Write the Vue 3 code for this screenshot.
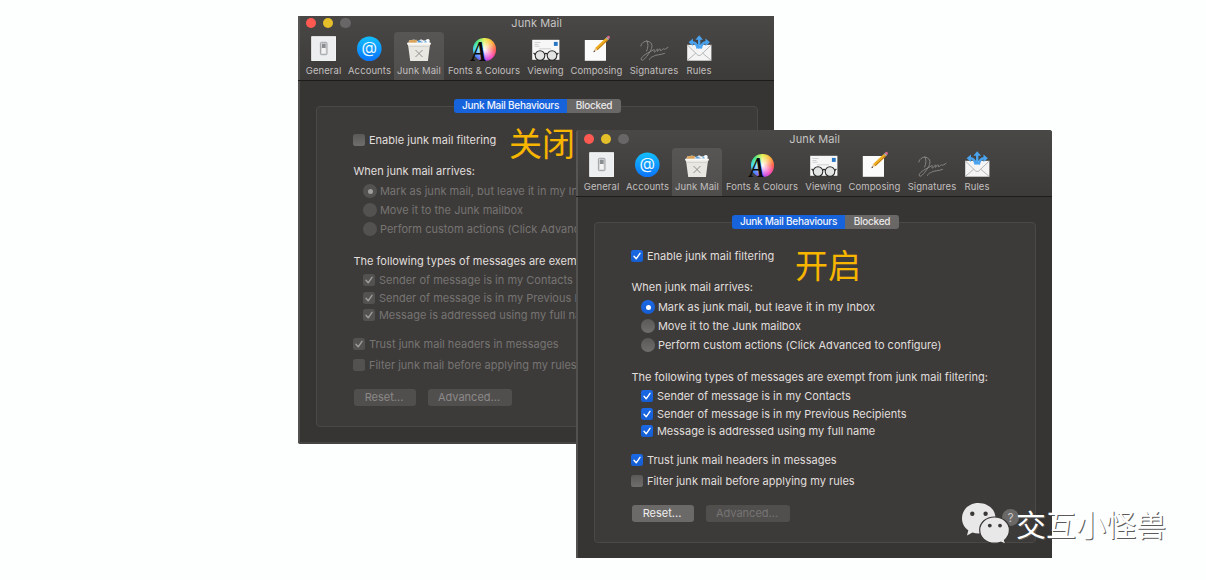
<script setup>
import { ref } from 'vue'

const tabs = [
  { id: 'general', label: 'General', width: 43 },
  { id: 'accounts', label: 'Accounts', width: 49 },
  { id: 'junk', label: 'Junk Mail', width: 50 },
  { id: 'fonts', label: 'Fonts & Colours', width: 80 },
  { id: 'viewing', label: 'Viewing', width: 43 },
  { id: 'composing', label: 'Composing', width: 59 },
  { id: 'signatures', label: 'Signatures', width: 56 },
  { id: 'rules', label: 'Rules', width: 34 }
]

const actions = [
  'Mark as junk mail, but leave it in my Inbox',
  'Move it to the Junk mailbox',
  'Perform custom actions (Click Advanced to configure)'
]

const exemptions = [
  'Sender of message is in my Contacts',
  'Sender of message is in my Previous Recipients',
  'Message is addressed using my full name'
]

const panels = ref([
  { id: 'off', enabled: false, note: '关闭' },
  { id: 'on', enabled: true, note: '开启' }
])
</script>

<template>
  <div class="canvas">
    <div v-for="panel in panels" :key="panel.id" class="window" :class="panel.id">
      <div class="header">
        <div class="titlebar">
          <div class="lights"><i class="red"></i><i class="yellow"></i><i class="grey"></i></div>
          <span class="title">Junk Mail</span>
        </div>
        <div class="toolbar">
          <div
            v-for="tab in tabs"
            :key="tab.id"
            class="tool"
            :class="{ active: tab.id === 'junk' }"
            :style="{ width: tab.width + 'px' }"
          >
            <div class="icon">
              <svg v-if="tab.id === 'general'" viewBox="0 0 28 28">
                <rect x="1.4" y="1.4" width="24.5" height="24.4" fill="#eceef0" />
                <rect x="1.8" y="1.8" width="23.7" height="23.6" fill="none" stroke="#fafafa" stroke-width=".8" />
                <rect x="10.4" y="7.3" width="6.6" height="12.4" rx="1" fill="#d5d6d7" stroke="#a0a2a4" />
                <rect x="11.9" y="8.8" width="3.7" height="4.5" fill="#8b8e91" />
                <rect x="11.9" y="13" width="3.7" height="5.2" fill="#f3f3f3" />
              </svg>
              <svg v-else-if="tab.id === 'accounts'" viewBox="0 0 28 28">
                <defs>
                  <linearGradient id="blue" x1="0" y1="0" x2="0" y2="1">
                    <stop offset="0" stop-color="#12c0fd" />
                    <stop offset="1" stop-color="#0b73fb" />
                  </linearGradient>
                </defs>
                <circle cx="13.3" cy="13.7" r="12.3" fill="url(#blue)" />
                <text x="13.3" y="18.2" text-anchor="middle" class="at">@</text>
              </svg>
              <svg v-else-if="tab.id === 'junk'" viewBox="0 0 28 28">
                <path d="M3 10 L4 5.5 9 4.5 13 6 16 4.2 20 6 24 4 25 10Z" fill="#dfe5ea" />
                <path d="M3.5 8 L4.5 5.3 12 4.8 11.5 8Z" fill="#d9a35c" />
                <path d="M12 7.5 L14 5 18 7.8Z" fill="#559ddb" />
                <path d="M17 7 L22.5 4 24.7 5 24 8Z" fill="#f8fbfd" />
                <path d="M19 7.5 L20.5 5 22 7.5Z" fill="#6baada" />
                <path d="M2.3 8 H25.7 L24.8 11 L22.9 26 H5.2 L3.2 11Z" fill="#e9e7e1" />
                <path d="M2.2 7.7 H25.8 V9.5 H2.2Z" fill="#fbfaf7" />
                <path d="M3.2 11.5 H24.7" stroke="#cfccc5" stroke-width=".7" />
                <path d="M10.5 15 L17.5 22 M17.5 15 L10.5 22" stroke="#93908b" stroke-width="1" />
              </svg>
              <template v-else-if="tab.id === 'fonts'">
                <span class="wheel"></span>
                <svg viewBox="0 0 28 28">
                  <g transform="translate(1.6 25.6) scale(.78 1)">
                    <text x="0" y="0" class="letter">A</text>
                  </g>
                </svg>
              </template>
              <svg v-else-if="tab.id === 'viewing'" viewBox="0 0 28 28">
                <rect x=".2" y="4.8" width="27.2" height="20" fill="#f7f7f7" />
                <path d="M2.5 7.5 h6 M2.5 9.5 h4 M2.5 11.3 h5" stroke="#c4c6c8" stroke-width=".8" />
                <path d="M7 13.8 h12" stroke="#bdbfc0" stroke-width=".7" />
                <rect x="21.9" y="6.9" width="3.8" height="4" fill="#2675c5" />
                <g fill="#e2e3e3" stroke="#2c2c2c" stroke-width="1.1">
                  <circle cx="8" cy="20.6" r="4.8" />
                  <circle cx="20" cy="20.6" r="4.8" />
                  <path d="M12.5 19.5 Q14 17.3 15.5 19.5 M3.2 19.5 L1.6 18 M24.8 19.5 L26.4 18" fill="none" />
                </g>
              </svg>
              <svg v-else-if="tab.id === 'composing'" viewBox="0 0 28 28">
                <rect x="1.8" y="5" width="21.2" height="20.8" fill="#fbfbfb" />
                <g transform="translate(.6 0)">
                  <path d="M9.8 17.2 L11.5 12.7 L14 15Z" fill="#ebc898" />
                  <path d="M9.8 17.2 L10.5 15.3 L11.6 16.4Z" fill="#333" />
                  <path d="M11.5 12.9 L22.2 2.9 L24.5 5.1 L14 15.1Z" fill="#efae22" />
                  <path d="M13.2 14.4 L23.8 4.5 L24.5 5.1 L14 15.1Z" fill="#b97611" />
                  <path d="M22.2 2.9 L23.3 1.9 L25.6 4.1 L24.5 5.1Z" fill="#b6babc" />
                  <path d="M23.3 1.9 Q24.5 .2 25.9 1.3 Q27 2.6 25.6 4.1Z" fill="#e2688b" />
                </g>
              </svg>
              <svg v-else-if="tab.id === 'signatures'" viewBox="0 0 28 28">
                <path
                  d="M.8 11 C1.5 7 6 5.3 9.3 6.8 C13.8 9 11.8 14.5 8.8 18.5 C6 22.5 2.8 26.5 1.3 24.8 C0 22.5 6.5 18.3 10.8 16.4 C13.5 15.1 14.8 13.2 14.2 15.7 C13.7 18.1 15.2 17.2 16.6 14.8 C17.8 12.8 18.2 14.4 17.5 16.4 C18.5 15 20.2 12.7 20.4 14.4 C20.1 16.9 21.2 15.9 22.5 14.3 C23.7 13 23.8 15 25.3 14 L28 12.4 M6.8 5.6 C8.5 9 8.3 12 6.6 16 M9.5 24.4 C11.5 20.8 13.3 22 14 21 C16 19.6 20 20.2 24.5 18.4"
                  fill="none" stroke="#8d8b8a" stroke-width=".9" stroke-linecap="round"
                />
              </svg>
              <svg v-else viewBox="0 0 28 28">
                <rect x="2.2" y="9.8" width="24.2" height="15.9" fill="#f4f4f4" />
                <path d="M2.4 10 L12.6 20 Q14.2 21.3 15.8 20 L26.2 10 M2.4 25.4 L10.7 18.2 M26.2 25.4 L17.7 18.2" fill="none" stroke="#a5a6a7" stroke-width=".8" />
                <g fill="none" stroke="#4aa3ef" stroke-width="2.4">
                  <path d="M14.2 13.5 V4" />
                  <path d="M12.6 13.5 C12 9.5 10 7.3 7 7.3" />
                  <path d="M15.8 13.5 C16.4 9.5 18.4 7.3 21.4 7.3" />
                </g>
                <path d="M14.2 .3 L18 4.7 H10.4Z M3.6 7.3 L8 3.6 V11Z M24.9 7.3 L20.5 3.6 V11Z" fill="#4aa3ef" />
              </svg>
            </div>
            <span class="tool-label">{{ tab.label }}</span>
          </div>
        </div>
      </div>

      <div class="group">
        <div class="segments">
          <span class="segment selected">Junk Mail Behaviours</span>
          <span class="segment">Blocked</span>
        </div>
        <span class="note">{{ panel.note }}</span>

        <div class="row enable">
          <span class="check" :class="{ on: panel.enabled }">
            <svg v-if="panel.enabled" viewBox="0 0 12 12"><path d="M3 6.3 L5.2 8.8 L9 3.3" /></svg>
          </span>
          Enable junk mail filtering
        </div>
        <div class="row heading arrives">When junk mail arrives:</div>
        <div class="radios" :class="{ dim: !panel.enabled }">
          <div v-for="(action, i) in actions" :key="action" class="row">
            <span class="radio" :class="{ on: i === 0 }"></span>{{ action }}
          </div>
        </div>
        <div class="row heading exempt">
          The following types of messages are exempt from junk mail filtering:
        </div>
        <div class="checks" :class="{ dim: !panel.enabled }">
          <div v-for="item in exemptions" :key="item" class="row">
            <span class="check on"><svg viewBox="0 0 12 12"><path d="M3 6.3 L5.2 8.8 L9 3.3" /></svg></span>{{ item }}
          </div>
        </div>
        <div :class="{ dim: !panel.enabled }">
          <div class="row trust">
            <span class="check on"><svg viewBox="0 0 12 12"><path d="M3 6.3 L5.2 8.8 L9 3.3" /></svg></span>
            Trust junk mail headers in messages
          </div>
          <div class="row filter"><span class="check"></span>Filter junk mail before applying my rules</div>
        </div>
        <div class="buttons">
          <button class="reset" :disabled="!panel.enabled">Reset...</button>
          <button class="advanced" disabled>Advanced...</button>
        </div>
        <span class="help">?</span>
      </div>
    </div>

    <div class="watermark">
      <svg width="50" height="44" viewBox="0 0 50 44">
        <g fill="#e8e8e8">
          <path d="M17.5 1 C27 1 34.5 7.5 34.5 16 C34.5 25 27 31.5 17.5 31.5 Q14.5 31.5 11.5 30.6 L6 33.5 L7.3 28.3 C3.5 25.7 1 21.5 1 16.3 C1 7.5 8 1 17.5 1Z" />
          <path d="M33.5 15 C42 15 48.4 20.6 48.4 28 C48.4 32.3 46.3 35.8 43.5 38.2 L44.8 42.3 L39.8 40.2 Q36.5 41.2 33.5 41.2 C25 41.2 18.7 35.5 18.7 28 C18.7 20.6 25 15 33.5 15Z" stroke="#383635" stroke-width="1.2" />
        </g>
        <g fill="#3b3938">
          <circle cx="11.3" cy="11.8" r="2.2" /><circle cx="24.6" cy="11.8" r="2.2" />
          <circle cx="28.8" cy="23.6" r="1.9" /><circle cx="39" cy="23.6" r="1.9" />
        </g>
      </svg>
      <span>交互小怪兽</span>
    </div>
  </div>
</template>

<style>
body {
  background: #fdfefe;
}
</style>

<style scoped>
.canvas {
  position: relative;
  width: 1206px;
  height: 580px;
  overflow: hidden;
  font-family: Inter, "Noto Sans CJK SC", sans-serif;
}

.window {
  position: absolute;
  box-sizing: border-box;
  width: 476px;
  overflow: hidden;
  background: #373533;
  box-shadow: inset 2px 0 0 #525150;
}

.window.off {
  left: 298px;
  top: 16px;
  height: 428px;
  border-bottom: 2px solid #464544;
  border-radius: 0 0 0 2px;
}

.window.off .header {
  margin-top: -2px;
}

.window.on {
  left: 576px;
  top: 130px;
  height: 428px;
  border-radius: 3px 3px 0 0;
}

.header {
  height: 66px;
  background: linear-gradient(#4a4846, #3d3b39);
  border-bottom: 1px solid #1d1c1b;
  box-shadow: inset 2px 0 0 #575655;
}

.titlebar {
  display: flex;
  align-items: center;
  height: 18px;
}

.lights {
  display: flex;
  gap: 7px;
  width: 94px;
  padding-left: 7.7px;
}

.lights i {
  width: 10.4px;
  height: 10.4px;
  border-radius: 50%;
}

.red { background: #fe5a52; }
.yellow { background: #e5bf29; }
.grey { background: #686666; }

.title {
  width: 274px;
  text-align: center;
  font-size: 11px;
  letter-spacing: 0.1px;
  color: #c5c4c3;
}

.toolbar {
  display: flex;
  padding-left: 4px;
}

.tool {
  display: flex;
  flex: none;
  flex-direction: column;
  align-items: center;
  box-sizing: border-box;
  height: 48px;
  padding-top: 3px;
  border-radius: 4px 4px 0 0;
}

.tool.active {
  background: linear-gradient(#585654, #504e4d);
}

.icon {
  position: relative;
  width: 28px;
  height: 28px;
}

.icon svg {
  position: relative;
  display: block;
  width: 28px;
  height: 28px;
  overflow: visible;
}

.at {
  font: 16px Inter, sans-serif;
  fill: #e9f7ff;
}

.letter {
  font: italic bold 29px "Liberation Serif", serif;
  fill: #0b0b0b;
}

.wheel {
  position: absolute;
  left: 3px;
  top: 3px;
  width: 22.5px;
  height: 22.5px;
  border-radius: 50%;
  background:
    radial-gradient(circle, #fff, transparent 65%),
    conic-gradient(#e6f04e, #ffb440, #ff5d50, #f94cbc, #b44cf5, #4d7cff, #3fd8f2, #43e686, #e6f04e);
}

.tool-label {
  margin-top: 1px;
  font-size: 9.5px;
  line-height: 13px;
  letter-spacing: 0.08px;
  white-space: nowrap;
  color: #c0bfbe;
}

.group {
  position: relative;
  box-sizing: border-box;
  width: 442px;
  height: 321px;
  margin: 25px 0 0 18px;
  padding: 25px 0 0 36.4px;
  background: #3d3b39;
  border: 1px solid #4b4948;
  border-radius: 4px;
  font-size: 11px;
  letter-spacing: 0.02px;
  color: #e0dfde;
}

/* the segmented control sits on the top edge of the group box */
.segments {
  position: absolute;
  left: 137px;
  top: -8px;
  display: flex;
  width: 167px;
  height: 14px;
  overflow: hidden;
  border-radius: 3px;
  font-size: 10px;
  font-weight: 500;
  letter-spacing: -0.25px;
  line-height: 13px;
  text-align: center;
}

.segment {
  flex: 1;
  background: #6a6867;
  color: #e8e7e7;
}

.segment.selected {
  flex: 0 0 113px;
  background: #1763db;
  color: #f0f4fc;
}

.note {
  position: absolute;
  left: 200px;
  top: 17px;
  font-family: "Noto Sans CJK SC", sans-serif;
  font-size: 33px;
  font-weight: 400;
  letter-spacing: 0;
  line-height: 48px;
  color: #f7b500;
}

.off .note {
  left: 192px;
  top: 11px;
}

.row {
  display: flex;
  align-items: center;
  height: 16px;
  white-space: nowrap;
}

.arrives { margin-top: 15px; }
.exempt { margin-top: 14px; }

.radios {
  margin: 2.5px 0 0.5px 10px;
}

.radios .row {
  height: 19px;
}

.checks {
  margin: 3px 0 0 10px;
}

.checks .row {
  height: 17.4px;
}

.trust { margin-top: 12.5px; }
.filter { margin-top: 4.5px; }

.check,
.radio {
  flex: none;
  background: linear-gradient(#5b5958, #706e6d);
}

.check {
  width: 12px;
  height: 12px;
  margin-right: 3.5px;
  border-radius: 2.5px;
}

.check svg {
  display: block;
}

.check path {
  fill: none;
  stroke: #fff;
  stroke-width: 1.4;
  stroke-linecap: round;
  stroke-linejoin: round;
}

.radio {
  display: flex;
  align-items: center;
  justify-content: center;
  width: 14px;
  height: 14px;
  margin-right: 2.5px;
  border-radius: 50%;
}

.check.on,
.radio.on {
  background: linear-gradient(#1b69e6, #155dd2);
}

.radio.on::after {
  content: '';
  width: 5px;
  height: 5px;
  border-radius: 50%;
  background: #fff;
}

.dim {
  color: #767473;
}

.dim .check,
.dim .radio {
  background: #545251;
}

.dim .check path {
  stroke: #a09e9d;
}

.dim .radio.on::after {
  background: #a09e9d;
}

.buttons {
  display: flex;
  gap: 12px;
  margin: 16px 0 0 0.6px;
}

button {
  height: 17px;
  padding: 0 2px 0 0;
  border: none;
  border-radius: 3px;
  background: #6c6a69;
  font: 11px Inter, sans-serif;
  color: #efeeee;
}

button:disabled {
  background: #514f4e;
  color: #767473;
}

.off button:disabled {
  color: #8b8988;
}

.reset { width: 62px; }
.advanced { width: 84px; }

.help {
  position: absolute;
  left: 407px;
  top: 286px;
  width: 17px;
  height: 17px;
  border-radius: 50%;
  background: #6b6968;
  font-size: 12px;
  line-height: 17px;
  text-align: center;
  color: #c9c8c7;
}

.watermark {
  position: absolute;
  left: 961px;
  top: 502px;
  display: flex;
}

.watermark span {
  margin: -1px 0 0 5px;
  font-family: "Noto Sans CJK SC", sans-serif;
  font-size: 30px;
  font-weight: 400;
  line-height: 44px;
  color: #fff;
  text-shadow: 1px 1px 0 #5a5a5a;
}
</style>
